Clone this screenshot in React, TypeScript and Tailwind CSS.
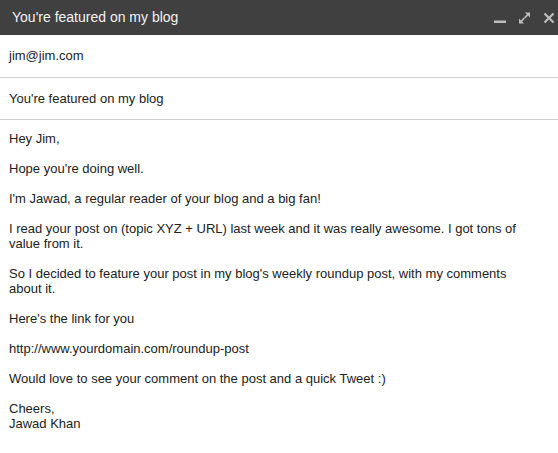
import React from 'react';

const BODY: string[] = [
  'Hey Jim,',
  '',
  "Hope you're doing well.",
  '',
  "I'm Jawad, a regular reader of your blog and a big fan!",
  '',
  'I read your post on (topic XYZ + URL) last week and it was really awesome. I got tons of value from it.',
  '',
  "So I decided to feature your post in my blog's weekly roundup post, with my comments about it.",
  '',
  "Here's the link for you",
  '',
  'http://www.yourdomain.com/roundup-post',
  '',
  'Would love to see your comment on the post and a quick Tweet :)',
  '',
  'Cheers,',
  'Jawad Khan',
];

const HeaderIcons: React.FC = () => (
  <div className="flex items-center gap-[12px]">
    {/* minimize */}
    <svg width="12" height="12" viewBox="0 0 12 12">
      <rect x="0" y="8.5" width="12" height="2.5" fill="#bdbdbd" />
    </svg>
    {/* pop-out */}
    <svg width="13" height="12" viewBox="0 0 12 12" fill="#bdbdbd">
      <path d="M6.5 0.5h5v5L9.6 3.6 6.8 6.4 5.6 5.2 8.4 2.4z" />
      <path d="M5.5 11.5h-5v-5l1.9 1.9 2.8-2.8 1.2 1.2-2.8 2.8z" />
    </svg>
    {/* close */}
    <svg width="12" height="12" viewBox="0 0 12 12">
      <path d="M1.5 1.5l9 9M10.5 1.5l-9 9" stroke="#bdbdbd" strokeWidth="2.2" />
    </svg>
  </div>
);

export default function App() {
  return (
    <div className="w-[558px] h-[453px] bg-white font-['Liberation_Sans',Arial,sans-serif] text-[#222] overflow-hidden">
      <div className="h-[35px] bg-[#404040] flex items-center justify-between pl-[12px] pr-[3px]">
        <span className="text-[14px] text-[#f2f2f2]">You're featured on my blog</span>
        <HeaderIcons />
      </div>

      <div className="h-[43px] px-[9px] flex items-center border-b border-[#d0d0d0] text-[13px]">
        jim@jim.com
      </div>
      <div className="h-[42px] px-[9px] flex items-center border-b border-[#d0d0d0] text-[13px]">
        You're featured on my blog
      </div>

      <div className="px-[9px] pt-[11px] pr-[20px] text-[13px] leading-[15px]">
        {BODY.map((line, i) => (
          <div key={i} className="min-h-[15px]">
            {line}
          </div>
        ))}
      </div>
    </div>
  );
}
